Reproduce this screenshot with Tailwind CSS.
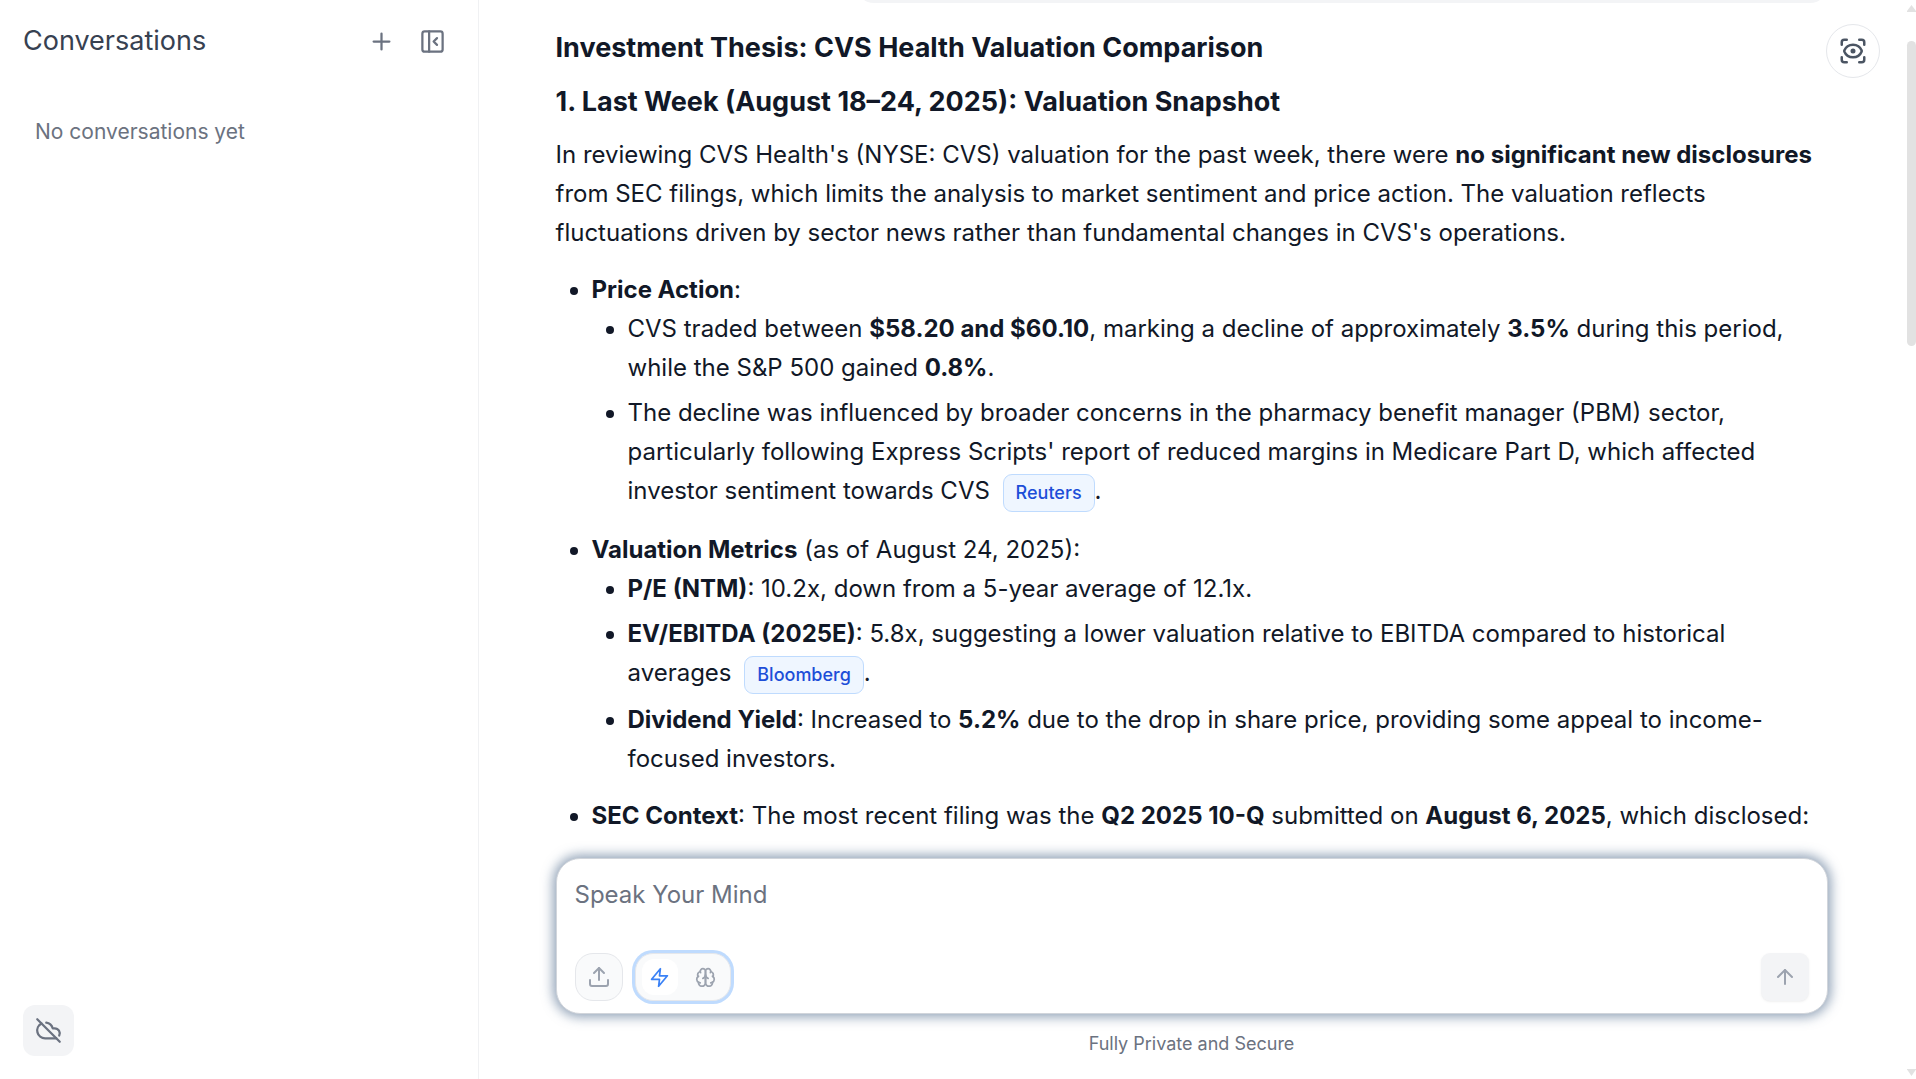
<!DOCTYPE html>
<html lang="en">
<head>
    <meta charset="utf-8" />
    <meta name="viewport" content="width=device-width, initial-scale=1.0" />
    <title>Conversations</title>
    <script src="https://cdn.jsdelivr.net/npm/@tailwindcss/browser@4"></script>
</head>
<body class="bg-white font-['Inter',sans-serif] text-[#111827]">

    <div class="flex h-screen overflow-hidden">
        <!-- Sidebar -->
        <aside class="flex w-[479px] shrink-0 flex-col justify-between border-r border-[#f0f1f3] bg-white">
            <div>
                <div class="flex items-center justify-between pt-[17px] pr-[22px] pl-[23px]">
                    <h2 class="text-[27px] leading-[48px] text-[#374151]">Conversations</h2>
                    <div class="flex items-center gap-[3px] text-[#6b7280]">
                        <button type="button" aria-label="New conversation" class="flex size-12 items-center justify-center">
                            <svg class="size-[27px]" viewBox="0 0 24 24" fill="none" stroke="currentColor" stroke-width="2" stroke-linecap="round" stroke-linejoin="round"><path d="M5 12h14"/><path d="M12 5v14"/></svg>
                        </button>
                        <button type="button" aria-label="Collapse sidebar" class="flex size-12 items-center justify-center">
                            <svg class="size-[27px]" viewBox="0 0 24 24" fill="none" stroke="currentColor" stroke-width="2" stroke-linecap="round" stroke-linejoin="round"><rect width="18" height="18" x="3" y="3" rx="2"/><path d="M9 3v18"/><path d="m16 15-3-3 3-3"/></svg>
                        </button>
                    </div>
                </div>
                <p class="mt-[47px] px-[35px] text-[21px] leading-10 text-[#6b7280]">No conversations yet</p>
            </div>
            <div class="p-[23px]">
                <button type="button" aria-label="Sync is off" class="flex size-[51px] items-center justify-center rounded-xl bg-[#f3f4f6] text-[#6b7280]">
                    <svg class="size-[27px]" viewBox="0 0 24 24" fill="none" stroke="currentColor" stroke-width="2" stroke-linecap="round" stroke-linejoin="round"><path d="m2 2 20 20"/><path d="M5.782 5.782A7 7 0 0 0 9 19h8.500a4.500 4.500 0 0 0 1.307-.193"/><path d="M21.532 16.500A4.500 4.500 0 0 0 17.500 10h-1.790A7.008 7.008 0 0 0 10 5.070"/></svg>
                </button>
            </div>
        </aside>

        <!-- Chat -->
        <main class="relative flex min-w-0 flex-1 flex-col pr-3">
            <div class="min-h-0 flex-1 overflow-hidden px-6">
                <div class="mx-auto max-w-[1272px]">
                    <!-- End of the user's message -->
                    <div class="-mt-14 ml-auto h-[59px] max-w-[972px] rounded-[18px] bg-[#f3f4f6]"></div>

                    <article class="pt-6 text-2xl leading-[39px]">
                        <h1 class="text-[27px] leading-[42px] font-bold">Investment Thesis: CVS Health Valuation Comparison</h1>
                        <h2 class="mt-3 text-[27px] leading-[42px] font-bold">1. Last Week (August 18–24, 2025): Valuation Snapshot</h2>
                        <p class="mt-3">In reviewing CVS Health's (NYSE: CVS) valuation for the past week, there were <strong>no significant new disclosures</strong> from SEC filings, which limits the analysis to market sentiment and price action. The valuation reflects fluctuations driven by sector news rather than fundamental changes in CVS's operations.</p>

                        <ul class="mt-[18px] list-disc space-y-[18px] pl-9">
                            <li>
                                <strong>Price Action</strong>:
                                <ul class="list-disc space-y-[6px] pl-9">
                                    <li>CVS traded between <strong>$58.20 and $60.10</strong>, marking a decline of approximately <strong>3.5%</strong> during this period, while the S&amp;P 500 gained <strong>0.8%</strong>.</li>
                                    <li>The decline was influenced by broader concerns in the pharmacy benefit manager (PBM) sector, particularly following Express Scripts' report of reduced margins in Medicare Part D, which affected investor sentiment towards CVS <a href="#" class="ml-[6px] inline-flex items-center rounded-[9px] border border-[#bfdbfe] bg-[#eff6ff] px-3 py-1 align-baseline text-lg leading-7 font-medium text-[#1d4ed8]">Reuters</a>.</li>
                                </ul>
                            </li>
                            <li>
                                <strong>Valuation Metrics</strong> (as of August 24, 2025):
                                <ul class="list-disc space-y-[6px] pl-9">
                                    <li><strong>P/E (NTM)</strong>: 10.2x, down from a 5-year average of 12.1x.</li>
                                    <li><strong>EV/EBITDA (2025E)</strong>: 5.8x, suggesting a lower valuation relative to EBITDA compared to historical averages <a href="#" class="ml-[6px] inline-flex items-center rounded-[9px] border border-[#bfdbfe] bg-[#eff6ff] px-3 py-1 align-baseline text-lg leading-7 font-medium text-[#1d4ed8]">Bloomberg</a>.</li>
                                    <li><strong>Dividend Yield</strong>: Increased to <strong>5.2%</strong> due to the drop in share price, providing some appeal to income-focused investors.</li>
                                </ul>
                            </li>
                            <li><strong>SEC Context</strong>: The most recent filing was the <strong>Q2 2025 10-Q</strong> submitted on <strong>August 6, 2025</strong>, which disclosed:</li>
                        </ul>
                    </article>
                </div>
            </div>

            <!-- Composer -->
            <div class="px-6">
                <form class="mx-auto flex max-w-[1272px] flex-col rounded-3xl border border-[#d1d5db] bg-white px-[18px] pt-4 pb-3 shadow-[0_0_12px_3px_rgba(71,100,135,0.6)]">
                    <textarea rows="1" aria-label="Message" placeholder="Speak Your Mind" class="h-[78px] w-full resize-none text-2xl leading-10 outline-none placeholder:text-[#6b7280]"></textarea>
                    <div class="flex items-center justify-between">
                        <div class="flex items-center gap-3">
                            <button type="button" aria-label="Upload file" class="flex size-12 items-center justify-center rounded-[18px] border border-[#e5e7eb] bg-[#f9fafb] text-[#9ca3af]">
                                <svg class="size-6" viewBox="0 0 24 24" fill="none" stroke="currentColor" stroke-width="2" stroke-linecap="round" stroke-linejoin="round"><path d="M21 15v4a2 2 0 0 1-2 2H5a2 2 0 0 1-2-2v-4"/><path d="m17 8-5-5-5 5"/><path d="M12 3v12"/></svg>
                            </button>
                            <div class="flex h-12 items-center gap-[10px] rounded-[18px] border border-[#e5e7eb] bg-[#f9fafb] px-[6px] ring-3 ring-[#bfdbfe]">
                                <button type="button" aria-label="Fast mode" aria-pressed="true" class="flex size-9 items-center justify-center rounded-xl bg-white text-[#3b82f6]">
                                    <svg class="size-[21px]" viewBox="0 0 24 24" fill="none" stroke="currentColor" stroke-width="2" stroke-linecap="round" stroke-linejoin="round"><path d="M13 2 3 14h9l-1 8 10-12h-9l1-8z"/></svg>
                                </button>
                                <button type="button" aria-label="Thinking mode" aria-pressed="false" class="flex size-9 items-center justify-center rounded-xl text-[#9ca3af]">
                                    <svg class="size-[21px]" viewBox="0 0 24 24" fill="none" stroke="currentColor" stroke-width="2" stroke-linecap="round" stroke-linejoin="round"><path d="M12 5a3 3 0 1 0-5.997.125 4 4 0 0 0-2.526 5.770 4 4 0 0 0 .556 6.588A4 4 0 1 0 12 18Z"/><path d="M12 5a3 3 0 1 1 5.997.125 4 4 0 0 1 2.526 5.770 4 4 0 0 1-.556 6.588A4 4 0 1 1 12 18Z"/><path d="M15 13a4.500 4.500 0 0 1-3-4 4.500 4.500 0 0 1-3 4"/><path d="M17.599 6.500a3 3 0 0 0 .399-1.375"/><path d="M6.003 5.125A3 3 0 0 0 6.401 6.500"/><path d="M3.477 10.896a4 4 0 0 1 .585-.396"/><path d="M19.938 10.500a4 4 0 0 1 .585.396"/><path d="M6 18a4 4 0 0 1-1.967-.516"/><path d="M19.967 17.484A4 4 0 0 1 18 18"/></svg>
                                </button>
                            </div>
                        </div>
                        <button type="submit" aria-label="Send" class="flex size-12 items-center justify-center rounded-[9px] bg-[#f3f4f6] text-[#9ca3af] shadow-sm shadow-black/5">
                            <svg class="size-6" viewBox="0 0 24 24" fill="none" stroke="currentColor" stroke-width="2" stroke-linecap="round" stroke-linejoin="round"><path d="m5 12 7-7 7 7"/><path d="M12 19V5"/></svg>
                        </button>
                    </div>
                </form>
                <p class="pt-4 pb-[21px] text-center text-lg leading-7 text-[#6b7280]">Fully Private and Secure</p>
            </div>

            <!-- Focus view toggle -->
            <button type="button" aria-label="Focus view" class="absolute top-6 right-9 flex size-[54px] items-center justify-center rounded-full border border-[#e5e7eb] bg-white text-[#4b5563]">
                <svg class="size-[30px]" viewBox="0 0 24 24" fill="none" stroke="currentColor" stroke-width="2" stroke-linecap="round" stroke-linejoin="round"><path d="M3 7V5a2 2 0 0 1 2-2h2"/><path d="M17 3h2a2 2 0 0 1 2 2v2"/><path d="M21 17v2a2 2 0 0 1-2 2h-2"/><path d="M7 21H5a2 2 0 0 1-2-2v-2"/><circle cx="12" cy="12" r="1"/><path d="M18.944 12.330a1 1 0 0 0 0-.660 7.500 7.500 0 0 0-13.888 0 1 1 0 0 0 0 .660 7.500 7.500 0 0 0 13.888 0"/></svg>
            </button>

            <!-- Scrollbar -->
            <div class="absolute inset-y-0 right-0 flex w-[9px] flex-col items-center justify-between pt-1 pb-[3px] text-[#e2e2e2]" aria-hidden="true">
                <div class="flex flex-col items-center gap-[29px]">
                    <svg class="h-2 w-[9px]" viewBox="0 0 9 8" fill="currentColor"><path d="M4.500 1 0 7v1h9V7z"/></svg>
                    <div class="h-[305px] w-[9px] rounded-full bg-[#e2e2e2]"></div>
                </div>
                <svg class="h-2 w-[9px]" viewBox="0 0 9 8" fill="currentColor"><path d="M4.500 8 0 1.500V1h9v.500z"/></svg>
            </div>
        </main>
    </div>

</body>
</html>
